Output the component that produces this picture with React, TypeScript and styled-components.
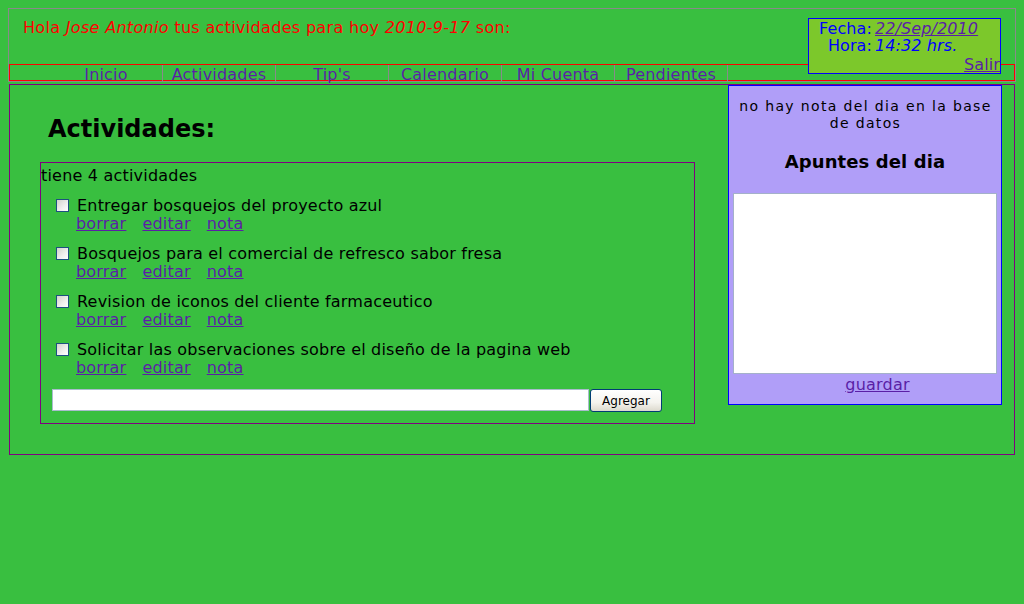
import React from "react";
import styled, { createGlobalStyle } from "styled-components";

const GlobalStyle = createGlobalStyle`
  body {
    margin: 8px;
    background: #39bf40;
    font-family: "DejaVu Sans", Verdana, sans-serif;
    font-size: 16px;
    letter-spacing: 0.2px;
    color: #000;
  }
  * { box-sizing: border-box; }
`;

const LINK = "#5a1fa6";

const Header = styled.header`
  position: relative;
  height: 74px;
  border: 1px solid #8a8a8a;
`;

const Greeting = styled.div`
  height: 55px;
  padding: 9px 0 0 14px;
  color: #ff0000;
  letter-spacing: 0.32px;
`;

const Em = styled.em`
  font-style: italic;
`;

const DateBox = styled.div`
  position: absolute;
  top: 9px;
  right: 14px;
  width: 193px;
  height: 56px;
  border: 1px solid #0000ff;
  background: #7cc82b;
  padding-top: 1px;
  display: grid;
  grid-template-columns: 63px auto;
  column-gap: 3px;
  line-height: 17px;
  color: #0000ff;
  letter-spacing: 0.1px;
`;

const DateLabel = styled.span`
  text-align: right;
`;

const DateValue = styled.span`
  font-style: italic;
`;

const DateLink = styled.a`
  font-style: italic;
  color: ${LINK};
  text-decoration: underline;
`;

const Logout = styled.a`
  grid-column: 1 / -1;
  justify-self: end;
  margin-top: 1px;
  color: ${LINK};
  text-decoration: underline;
`;

const Nav = styled.nav`
  height: 17px;
  border: 1px solid #ff0000;
  padding-left: 40px;
  display: flex;
`;

const NavItem = styled.a`
  width: 113px;
  height: 16px;
  border-right: 1px solid #8a8a8a;
  text-align: center;
  color: ${LINK};
  text-decoration: none;
  white-space: nowrap;
`;

const Main = styled.main`
  display: flex;
  align-items: flex-start;
  height: 371px;
  margin: 2px 1px 0;
  border: 1px solid #800080;
`;

const Content = styled.section`
  flex: 1;
  padding-left: 30px;
`;

const Title = styled.h1`
  margin: 30px 0 19px 8px;
  font-size: 24px;
  line-height: 28px;
  font-weight: bold;
  letter-spacing: 0;
`;

const ActivityBox = styled.div`
  width: 655px;
  border: 1px solid #800080;
  padding: 4px 0 11px;
  letter-spacing: 0.2px;
`;

const Count = styled.div`
  line-height: 18px;
  margin-bottom: 12px;
`;

const Item = styled.div`
  margin-bottom: 12px;
  line-height: 18px;
`;

const ItemRow = styled.label`
  display: flex;
  align-items: flex-start;
  gap: 8px;
  padding-left: 15px;
`;

const Check = styled.input`
  appearance: none;
  margin: 2px 0 0;
  width: 13px;
  height: 13px;
  border: 1px solid #1c5180;
  background: linear-gradient(135deg, #d2d2cc 0%, #f0f0ee 60%, #ffffff 100%);
  flex: none;
`;

const Links = styled.div`
  display: flex;
  gap: 16px;
  padding-left: 35px;
`;

const ItemLink = styled.a`
  color: ${LINK};
  text-decoration: underline;
`;

const AddForm = styled.form`
  display: flex;
  align-items: flex-start;
  gap: 1px;
  margin: 1px 0 0 11px;
`;

const TextInput = styled.input`
  width: 537px;
  height: 22px;
  border: 1px solid #a9bccd;
  background: #fff;
  margin: 0;
  padding: 0 3px;
`;

const Button = styled.button`
  width: 72px;
  height: 23px;
  margin: 0;
  padding: 0;
  border: 1px solid #003c74;
  border-radius: 3px;
  background: linear-gradient(#ffffff 0%, #f4f3ee 60%, #dcd9cd 100%);
  font-family: "DejaVu Sans", sans-serif;
  font-size: 12px;
  letter-spacing: 0;
  color: #000;
`;

const Sidebar = styled.aside`
  flex: none;
  width: 274px;
  height: 320px;
  margin-right: 12px;
  border: 1px solid #0000ff;
  background: #b09ef8;
  padding-top: 12px;
  text-align: center;
`;

const Notice = styled.p`
  margin: 0;
  padding-left: 1px;
  font-size: 14px;
  line-height: 17px;
  letter-spacing: 1.35px;
`;

const SideTitle = styled.h3`
  margin: 19px 0 0;
  font-size: 18px;
  line-height: 21px;
  font-weight: bold;
  letter-spacing: 0.1px;
`;

const NoteArea = styled.textarea`
  display: block;
  width: 264px;
  height: 181px;
  margin: 21px 4px 0;
  border: 1px solid #a4b1c9;
  background: #fff;
  resize: none;
`;

const SaveRow = styled.div`
  margin-top: 2px;
  padding-left: 25px;
  line-height: 18px;
`;

const activities = [
  "Entregar bosquejos del proyecto azul",
  "Bosquejos para el comercial de refresco sabor fresa",
  "Revision de iconos del cliente farmaceutico",
  "Solicitar las observaciones sobre el diseño de la pagina web",
];

const navItems = ["Inicio", "Actividades", "Tip's", "Calendario", "Mi Cuenta", "Pendientes"];

export default function App() {
  return (
    <>
      <GlobalStyle />
      <Header>
        <Greeting>
          Hola <Em>Jose Antonio</Em> tus actividades para hoy <Em>2010-9-17</Em> son:
        </Greeting>
        <DateBox>
          <DateLabel>Fecha:</DateLabel>
          <DateLink href="#">22/Sep/2010</DateLink>
          <DateLabel>Hora:</DateLabel>
          <DateValue>14:32 hrs.</DateValue>
          <Logout href="#">Salir</Logout>
        </DateBox>
        <Nav>
          {navItems.map((n) => (
            <NavItem key={n} href="#">
              {n}
            </NavItem>
          ))}
        </Nav>
      </Header>
      <Main>
        <Content>
          <Title>Actividades:</Title>
          <ActivityBox>
            <Count>tiene 4 actividades</Count>
            {activities.map((a) => (
              <Item key={a}>
                <ItemRow>
                  <Check type="checkbox" />
                  <span>{a}</span>
                </ItemRow>
                <Links>
                  <ItemLink href="#">borrar</ItemLink>
                  <ItemLink href="#">editar</ItemLink>
                  <ItemLink href="#">nota</ItemLink>
                </Links>
              </Item>
            ))}
            <AddForm onSubmit={(e) => e.preventDefault()}>
              <TextInput type="text" />
              <Button type="submit">Agregar</Button>
            </AddForm>
          </ActivityBox>
        </Content>
        <Sidebar>
          <Notice>no hay nota del dia en la base de datos</Notice>
          <SideTitle>Apuntes del dia</SideTitle>
          <NoteArea />
          <SaveRow>
            <ItemLink href="#">guardar</ItemLink>
          </SaveRow>
        </Sidebar>
      </Main>
    </>
  );
}
